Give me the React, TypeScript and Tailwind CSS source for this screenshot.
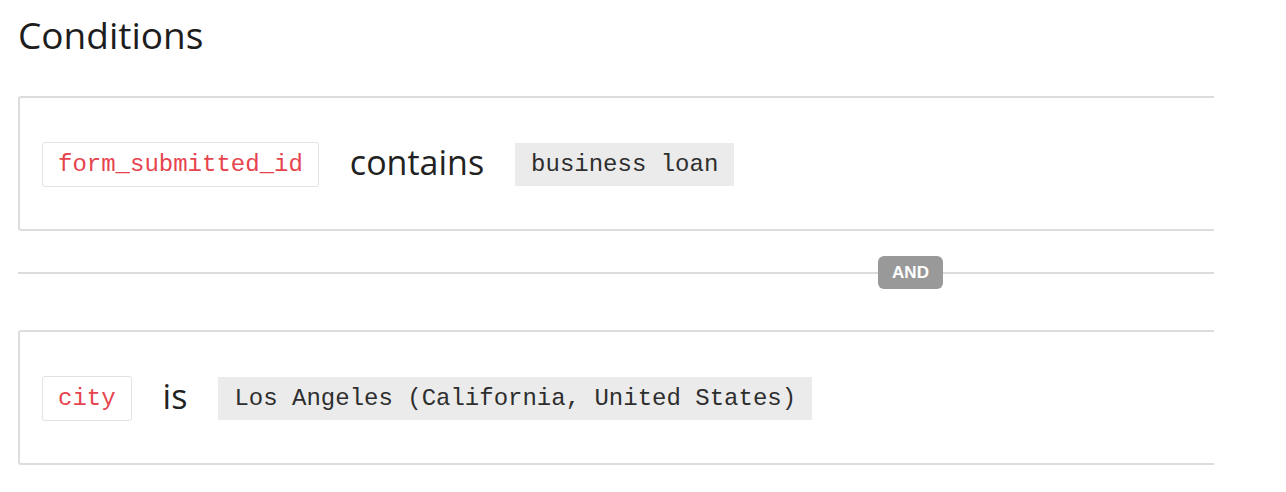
export default function App() {
  const mono = { fontFamily: '"Liberation Mono", monospace' }

  const Condition = ({ field, op, value }: { field: string; op: string; value: string }) => (
    <div className="h-[135px] border-2 border-r-0 border-[#dddddd] rounded-l-[3px] pl-[22px] pt-[2px] flex items-center">
      <span
        className="h-[45px] px-[15px] flex items-center border border-[#e2e2e2] rounded-[3px] text-[24px] text-[#e6444e] bg-white"
        style={mono}
      >
        {field}
      </span>
      <span className="mx-[31px] text-[34px] text-[#222] leading-none -mt-[6px]">{op}</span>
      <span className="h-[43px] px-4 flex items-center bg-[#ebebeb] text-[24px] text-[#2e2e2e]" style={mono}>
        {value}
      </span>
    </div>
  )

  return (
    <div className="w-[1286px] h-[492px] bg-white overflow-hidden" style={{ fontFamily: '"Open Sans", sans-serif' }}>
      <div className="w-[1214px] pl-[18px]">
        <h1 className="pt-[12px] h-[96px] text-[37px] leading-[46px] text-[#1d1d1d] font-normal">Conditions</h1>

        <Condition field="form_submitted_id" op="contains" value="business loan" />

        <div className="h-[99px] pt-[25px] flex items-start">
          <div className="flex items-center w-full">
            <div className="w-[860px] h-[2px] bg-[#dcdcdc]" />
            <span
              className="w-[65px] h-[33px] rounded-[6px] bg-[#999999] text-white text-[17px] font-bold flex items-center justify-center"
              style={{ fontFamily: '"Liberation Sans", sans-serif' }}
            >
              AND
            </span>
            <div className="flex-1 h-[2px] bg-[#dcdcdc]" />
          </div>
        </div>

        <Condition field="city" op="is" value="Los Angeles (California, United States)" />
      </div>
    </div>
  )
}
